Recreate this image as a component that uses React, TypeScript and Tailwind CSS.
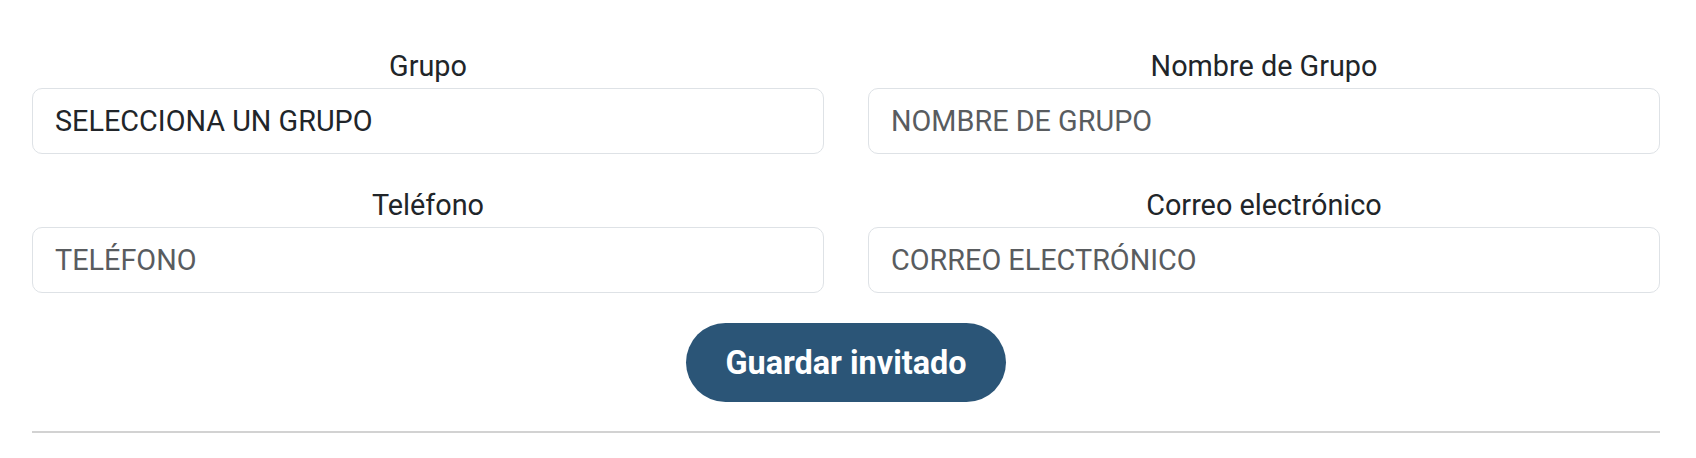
// Formulario de invitado: grupo, nombre de grupo, teléfono, correo y botón de guardar

import React, { useState } from 'react';

type Field = {
  label: string;
  placeholder: string;
  kind: 'select' | 'input';
};

const fields: Field[] = [
  { label: 'Grupo', placeholder: 'SELECCIONA UN GRUPO', kind: 'select' },
  { label: 'Nombre de Grupo', placeholder: 'NOMBRE DE GRUPO', kind: 'input' },
  { label: 'Teléfono', placeholder: 'TELÉFONO', kind: 'input' },
  { label: 'Correo electrónico', placeholder: 'CORREO ELECTRÓNICO', kind: 'input' },
];

const controlClass =
  "block w-full h-[66px] rounded-[10px] border border-[#dee2e6] bg-white pl-[22px] pr-[22px] text-[28.8px] text-[#212529] outline-none placeholder:text-[#595c5f] font-['Roboto',sans-serif]";

const App = () => {
  const [values, setValues] = useState<Record<string, string>>({});

  return (
    <div className="min-h-screen bg-white pt-[45px] pl-8 pr-9 font-['Roboto',sans-serif] text-[#212529]">
      <div className="grid grid-cols-2 gap-x-[44px] gap-y-[30px]">
        {fields.map((field) => (
          <div key={field.label} className="flex flex-col">
            <label className="text-center text-[28.8px] leading-[43.2px]">{field.label}</label>
            {field.kind === 'select' ? (
              <select
                className={`${controlClass} appearance-none`}
                value={values[field.label] ?? ''}
                onChange={(e) => setValues({ ...values, [field.label]: e.target.value })}
              >
                <option value="">{field.placeholder}</option>
              </select>
            ) : (
              <input
                className={controlClass}
                placeholder={field.placeholder}
                value={values[field.label] ?? ''}
                onChange={(e) => setValues({ ...values, [field.label]: e.target.value })}
              />
            )}
          </div>
        ))}
      </div>

      <div className="mt-[30px] flex justify-center">
        <button
          type="button"
          className="h-[79px] w-[320px] rounded-full bg-[#2b5577] text-[32.4px] font-bold text-white"
        >
          Guardar invitado
        </button>
      </div>

      <div className="mt-[29px] h-[2px] bg-[#d2d2d2]" />
    </div>
  );
};

export default App;
